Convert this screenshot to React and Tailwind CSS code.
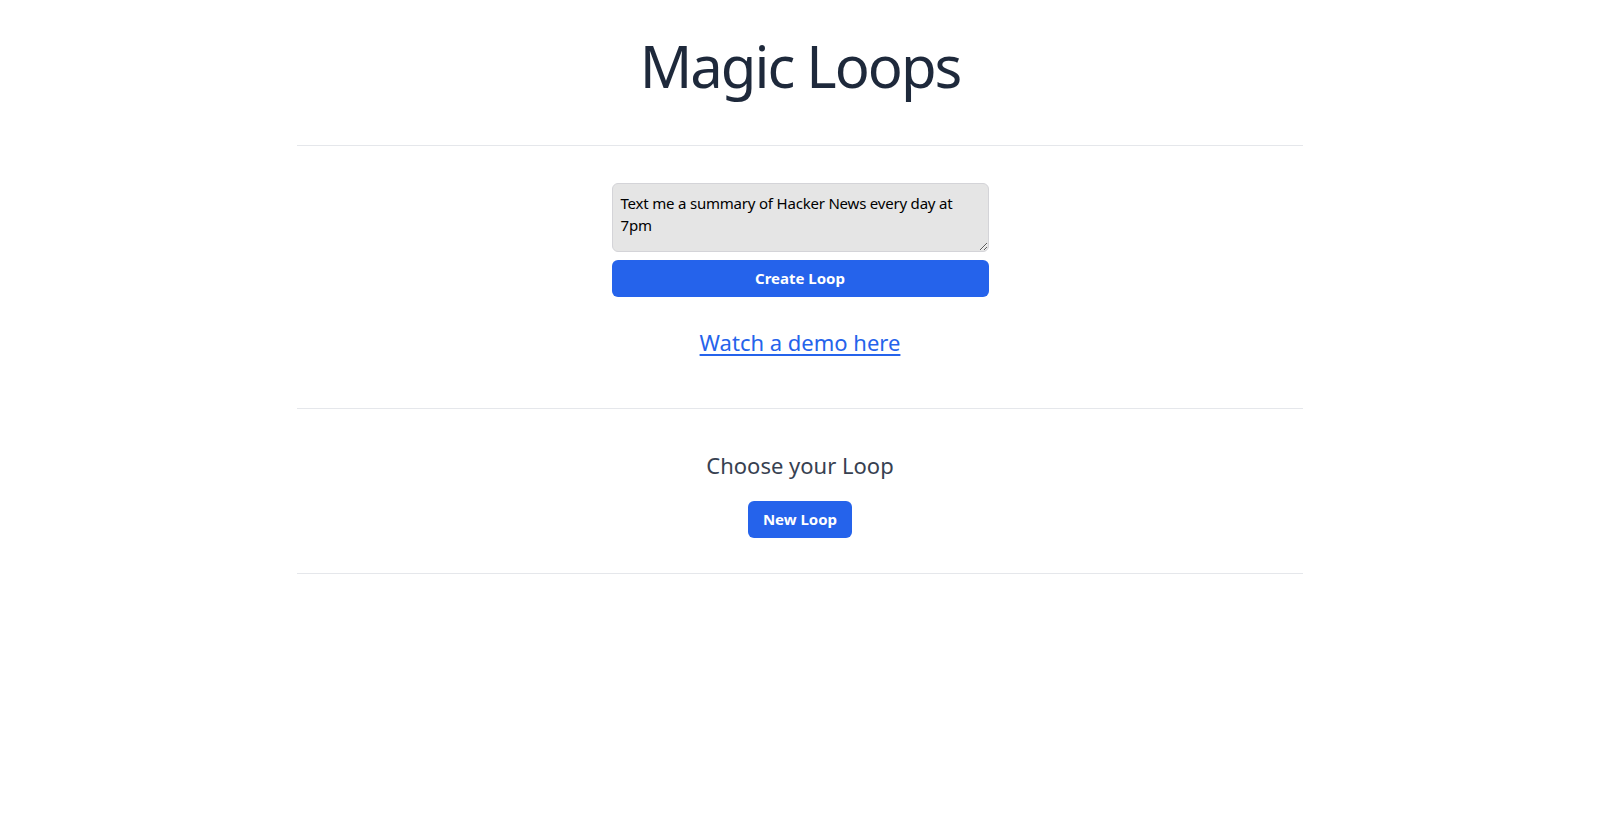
export default function App() {
  return (
    <div className="min-h-screen bg-white" style={{ fontFamily: '"Noto Sans", "Open Sans", sans-serif' }}>
      <div className="mx-auto w-[1006px] flex flex-col items-center">
        <h1 className="pt-[30px] pb-[43px] text-[58px] tracking-[-2px] leading-[72px] text-[#1e293b]">Magic Loops</h1>
        <div className="w-full h-px bg-[#e5e7eb]"></div>
        <div className="w-[377px] mt-[37px] flex flex-col gap-[8px]">
          <textarea
            className="w-full h-[69px] rounded-md border border-[#d4d4d8] bg-[#e5e5e5] px-[8px] py-[8px] text-[15px] tracking-[-0.2px] leading-[22px] text-black outline-none"
            defaultValue="Text me a summary of Hacker News every day at 7pm"
          />
          <button className="w-full h-[37px] rounded-md bg-[#2563eb] text-white font-bold text-[15px]">Create Loop</button>
        </div>
        <a href="#" className="mt-[29px] text-[22px] leading-[32px] text-[#2563eb] underline underline-offset-[3px]">Watch a demo here</a>
        <div className="w-full h-px bg-[#e5e7eb] mt-[50px]"></div>
        <h2 className="mt-[41px] text-[22px] leading-[30px] text-[#374151]">Choose your Loop</h2>
        <button className="mt-[21px] h-[37px] px-[15px] rounded-md bg-[#2563eb] text-white font-bold text-[15px]">New Loop</button>
        <div className="w-full h-px bg-[#e5e7eb] mt-[35px]"></div>
      </div>
    </div>
  );
}
